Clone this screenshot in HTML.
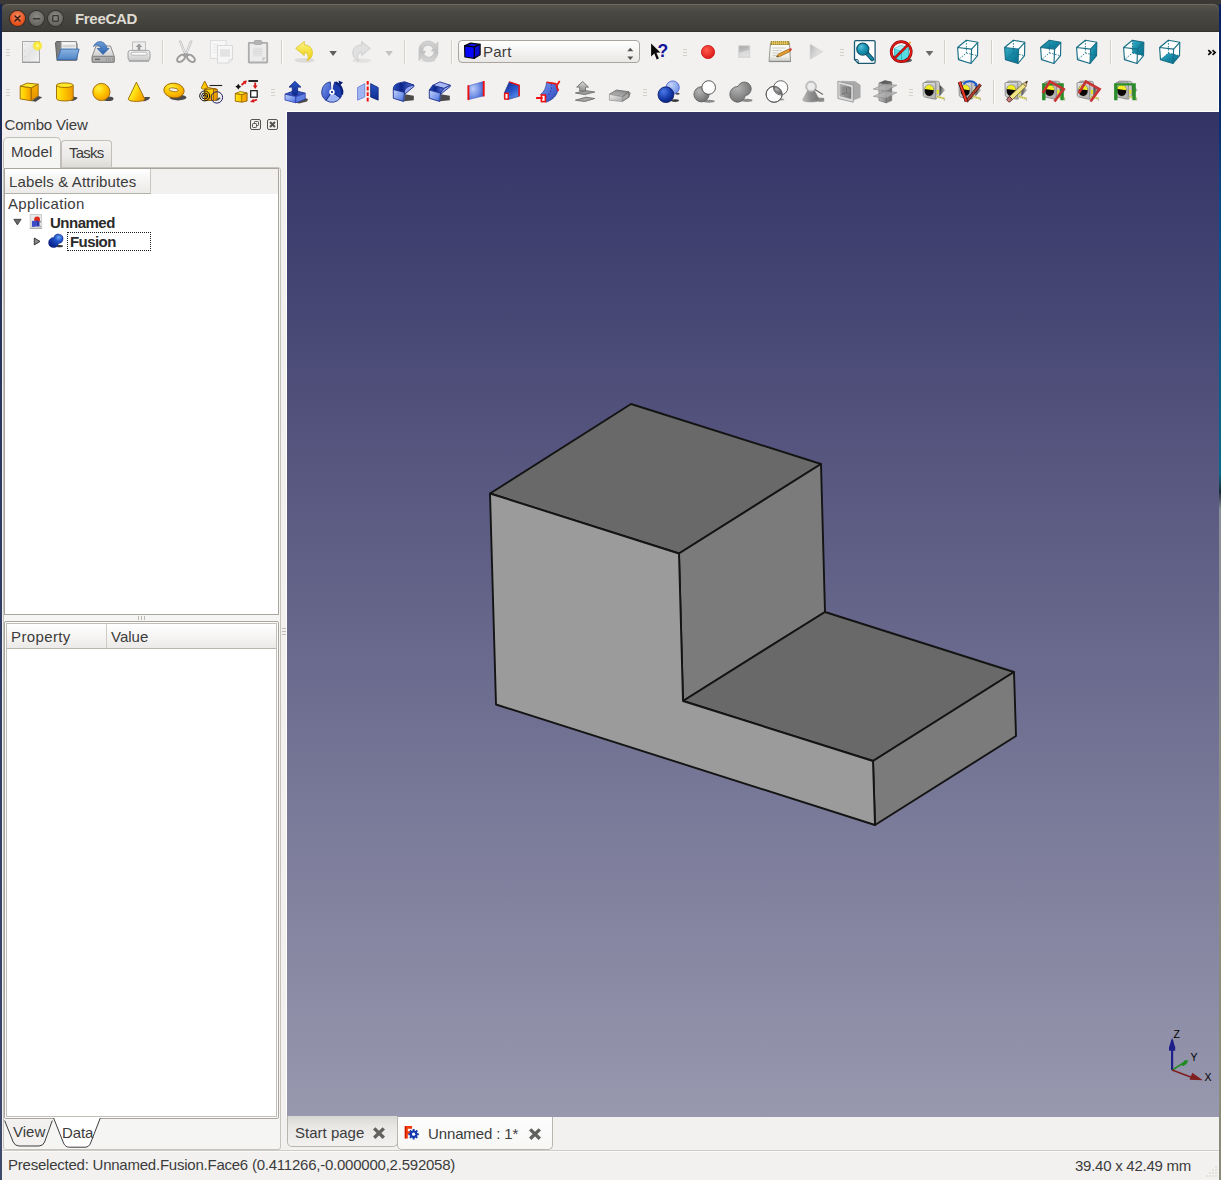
<!DOCTYPE html>
<html><head><meta charset="utf-8"><title>FreeCAD</title>
<style>
html,body{margin:0;padding:0;}
body{width:1221px;height:1180px;position:relative;overflow:hidden;background:#f2f1f0;font-family:"Liberation Sans",sans-serif;}
.t{position:absolute;white-space:pre;line-height:normal;}
.ic{position:absolute;overflow:visible;}
.abs{position:absolute;}

</style></head>
<body>
<svg width="0" height="0" style="position:absolute"><defs>
<linearGradient id="gPage" x1="0" y1="0" x2="1" y2="1"><stop offset="0" stop-color="#f4f4f4"/><stop offset="0.500" stop-color="#e4e4e4"/><stop offset="1" stop-color="#f2f2f2"/></linearGradient>
<radialGradient id="gGlow"><stop offset="0" stop-color="#fffbe0"/><stop offset="0.300" stop-color="#fff04a"/><stop offset="0.750" stop-color="#f4e52a" stop-opacity="0.900"/><stop offset="1" stop-color="#f4e52a" stop-opacity="0"/></radialGradient>
<linearGradient id="gFolder" x1="0" y1="0" x2="0" y2="1"><stop offset="0" stop-color="#8db4e2"/><stop offset="1" stop-color="#4f86c6"/></linearGradient>
<linearGradient id="gDrive" x1="0" y1="0" x2="0" y2="1"><stop offset="0" stop-color="#f0f0f0"/><stop offset="1" stop-color="#bdbdbd"/></linearGradient>
<linearGradient id="gBlueArrow" x1="0" y1="0" x2="0" y2="1"><stop offset="0" stop-color="#6f9fd8"/><stop offset="1" stop-color="#2c62ad"/></linearGradient>
<linearGradient id="gPrinter" x1="0" y1="0" x2="0" y2="1"><stop offset="0" stop-color="#f4f4f4"/><stop offset="1" stop-color="#c9c9c9"/></linearGradient>
<linearGradient id="gYellowArrow" x1="0" y1="0" x2="0" y2="1"><stop offset="0" stop-color="#fff690"/><stop offset="0.500" stop-color="#f4e040"/><stop offset="1" stop-color="#ecd020"/></linearGradient>
<radialGradient id="gRed" cx="0.400" cy="0.350" r="0.700"><stop offset="0" stop-color="#ff5a4a"/><stop offset="1" stop-color="#dc1818"/></radialGradient>
<linearGradient id="gStop" x1="0" y1="0" x2="0.300" y2="1"><stop offset="0" stop-color="#a4a4a4"/><stop offset="0.550" stop-color="#c0c0c0"/><stop offset="0.600" stop-color="#d8d8d8"/><stop offset="1" stop-color="#e0e0e0"/></linearGradient>
<radialGradient id="gTealBall" cx="0.350" cy="0.300" r="0.800"><stop offset="0" stop-color="#5cc4dc"/><stop offset="0.500" stop-color="#1a94b4"/><stop offset="1" stop-color="#0d7490"/></radialGradient>
<linearGradient id="gTeal" x1="0" y1="0" x2="1" y2="1"><stop offset="0" stop-color="#3aaec8"/><stop offset="0.500" stop-color="#1688a6"/><stop offset="1" stop-color="#0a6e8c"/></linearGradient>
<linearGradient id="gY1" x1="0" y1="0" x2="0" y2="1"><stop offset="0" stop-color="#ffd800"/><stop offset="1" stop-color="#f7a400"/></linearGradient>
<linearGradient id="gY2" x1="0" y1="0" x2="0" y2="1"><stop offset="0" stop-color="#f7b000"/><stop offset="1" stop-color="#e89000"/></linearGradient>
<linearGradient id="gY3" x1="0" y1="0" x2="1" y2="0"><stop offset="0" stop-color="#ffe820"/><stop offset="0.400" stop-color="#ffcc00"/><stop offset="1" stop-color="#f09800"/></linearGradient>
<radialGradient id="gYball" cx="0.350" cy="0.300" r="0.800"><stop offset="0" stop-color="#fff040"/><stop offset="0.500" stop-color="#ffc400"/><stop offset="1" stop-color="#f09400"/></radialGradient>
<linearGradient id="gB1" x1="0" y1="0" x2="1" y2="1"><stop offset="0" stop-color="#7c9cf0"/><stop offset="1" stop-color="#2340b8"/></linearGradient>
<linearGradient id="gB2" x1="0" y1="0" x2="1" y2="1"><stop offset="0" stop-color="#5578e0"/><stop offset="1" stop-color="#1a2f9a"/></linearGradient>
<linearGradient id="gB3" x1="0" y1="0" x2="0" y2="1"><stop offset="0" stop-color="#2a55c8"/><stop offset="1" stop-color="#0e2a8a"/></linearGradient>
<linearGradient id="gG1" x1="0" y1="0" x2="0" y2="1"><stop offset="0" stop-color="#d8d8d8"/><stop offset="1" stop-color="#8f8f8f"/></linearGradient>
<linearGradient id="gG2" x1="0" y1="0" x2="1" y2="0"><stop offset="0" stop-color="#bcbcbc"/><stop offset="0.500" stop-color="#8c8c8c"/><stop offset="1" stop-color="#747474"/></linearGradient>
<radialGradient id="gBallBl" cx="0.350" cy="0.300" r="0.800"><stop offset="0" stop-color="#4a7ae8"/><stop offset="0.600" stop-color="#1438a8"/><stop offset="1" stop-color="#0a1f70"/></radialGradient>
<radialGradient id="gBallLt" cx="0.350" cy="0.300" r="0.800"><stop offset="0" stop-color="#c4d4fa"/><stop offset="1" stop-color="#6f92e4"/></radialGradient>
<radialGradient id="gBallGr" cx="0.350" cy="0.300" r="0.800"><stop offset="0" stop-color="#b4b4b4"/><stop offset="1" stop-color="#6a6a6a"/></radialGradient>
<linearGradient id="gYcone" x1="0.200" y1="0.600" x2="0.900" y2="1"><stop offset="0" stop-color="#ffee20"/><stop offset="0.500" stop-color="#ffc000"/><stop offset="1" stop-color="#f09800"/></linearGradient>
<linearGradient id="gBdark" x1="0" y1="0" x2="1" y2="0"><stop offset="0" stop-color="#2a52c0"/><stop offset="0.400" stop-color="#0a2488"/><stop offset="1" stop-color="#5a7ae0"/></linearGradient>
<linearGradient id="gBlite" x1="0" y1="0" x2="1" y2="1"><stop offset="0" stop-color="#c4d2fa"/><stop offset="0.600" stop-color="#7a9aec"/><stop offset="1" stop-color="#3a62d0"/></linearGradient>
<radialGradient id="gBrad" cx="0.300" cy="0.400" r="0.800"><stop offset="0" stop-color="#bccbf8"/><stop offset="0.600" stop-color="#6a8ae4"/><stop offset="1" stop-color="#3355c8"/></radialGradient>
<linearGradient id="gBloft" x1="0.200" y1="0" x2="0.800" y2="1"><stop offset="0" stop-color="#12309a"/><stop offset="0.500" stop-color="#2a55c8"/><stop offset="1" stop-color="#5a9af0"/></linearGradient>
<linearGradient id="gGtop" x1="0" y1="1" x2="1" y2="0"><stop offset="0" stop-color="#c4c4c4"/><stop offset="1" stop-color="#7e7e7e"/></linearGradient>
<linearGradient id="gGfront" x1="0" y1="0" x2="1" y2="1"><stop offset="0" stop-color="#ececec"/><stop offset="1" stop-color="#aaaaaa"/></linearGradient>
<linearGradient id="gShadow" x1="0" y1="0" x2="1" y2="0.300"><stop offset="0" stop-color="#1e1e1e"/><stop offset="1" stop-color="#4a4a4a" stop-opacity="0.250"/></linearGradient>
<linearGradient id="gRefresh" x1="0" y1="0" x2="0" y2="1"><stop offset="0" stop-color="#d6d6d6"/><stop offset="1" stop-color="#c0c0c0"/></linearGradient>
<linearGradient id="gNote" x1="0" y1="0" x2="0" y2="1"><stop offset="0" stop-color="#fbfbf8"/><stop offset="0.700" stop-color="#f0f0ec"/><stop offset="1" stop-color="#c8c8c4"/></linearGradient>
<linearGradient id="gPlay" x1="0" y1="0" x2="1" y2="0.600"><stop offset="0" stop-color="#b4b4b4"/><stop offset="0.500" stop-color="#d4d4d4"/><stop offset="1" stop-color="#e4e4e4"/></linearGradient>
<radialGradient id="gFusion" cx="0.700" cy="0.250" r="0.800"><stop offset="0" stop-color="#6aa8f4"/><stop offset="0.350" stop-color="#1f52c8"/><stop offset="1" stop-color="#08208a"/></radialGradient>
</defs></svg>
<!-- desktop edges -->
<div class="abs" style="left:0;top:0;width:1221px;height:4px;background:#3a3935"></div>
<div class="abs" style="left:0;top:4px;width:2px;height:1176px;background:linear-gradient(#17244f,#2c3a63 40%,#3d4a6c)"></div>
<div class="abs" style="left:1219px;top:4px;width:2px;height:1176px;background:linear-gradient(#0a2060 0%,#0a2a6a 9%,#0a4a8a 17%,#0a6a88 40%,#1a2a3a 41.500%,#8a9098 43%,#8a8a80 70%,#8a8a78 100%)"></div>
<!-- title bar -->
<div class="abs" style="left:2px;top:4px;width:1217px;height:10px;background:#3a3935"></div>
<div class="abs" style="left:2px;top:4px;width:1217px;height:28px;border-radius:6px 6px 0 0;background:linear-gradient(#57554d,#4a4943 30%,#3d3c38);box-shadow:inset 0 1px 0 #6a685f"></div>
<div class="abs" style="left:2px;top:31px;width:1217px;height:1px;background:#33322e"></div>
<!-- window buttons -->
<div class="abs" style="left:10px;top:10.700px;width:15px;height:15px;border-radius:50%;background:radial-gradient(circle at 50% 35%,#f58a62,#e9541f 60%,#c8400f);box-shadow:0 0 0 1px #3a2a22"></div>
<svg class="abs" style="left:10px;top:10.700px" width="15" height="15" viewBox="0 0 15 15"><path d="M5 5l5 5M10 5l-5 5" stroke="#3b2118" stroke-width="1.6" stroke-linecap="round"/></svg>
<div class="abs" style="left:29px;top:10.700px;width:15px;height:15px;border-radius:50%;background:radial-gradient(circle at 50% 35%,#8b8a83,#6d6c66 60%,#5a5953);box-shadow:0 0 0 1px #33322e"></div>
<svg class="abs" style="left:29px;top:10.700px" width="15" height="15" viewBox="0 0 15 15"><path d="M4.5 7.7h6" stroke="#3a3935" stroke-width="1.5" stroke-linecap="round"/></svg>
<div class="abs" style="left:48px;top:10.700px;width:15px;height:15px;border-radius:50%;background:radial-gradient(circle at 50% 35%,#8b8a83,#6d6c66 60%,#5a5953);box-shadow:0 0 0 1px #33322e"></div>
<svg class="abs" style="left:48px;top:10.700px" width="15" height="15" viewBox="0 0 15 15"><rect x="4.7" y="4.7" width="5.6" height="5.6" rx="0.8" fill="none" stroke="#3a3935" stroke-width="1.3"/></svg>

<!-- 3D viewport -->
<div class="abs" style="left:286px;top:111px;width:933px;height:1006px;background:#fdfdfb"></div>
<div class="abs" style="left:287px;top:112px;width:932px;height:1005px;background:linear-gradient(#333366,#9898af)"></div>
<div class="abs" style="left:1218px;top:32px;width:1px;height:80px;background:#fdfdfb"></div>
<svg class="abs" style="left:287px;top:112px" width="932" height="1005" viewBox="287 112 932 1005">
<g stroke="#141414" stroke-width="1.9" stroke-linejoin="round" stroke-linecap="round">
<polygon points="631,404 821,464 679,553.5 490,493.5" fill="#696969"/>
<polygon points="679,553.5 821,464 825,612 683,701" fill="#7b7b7b"/>
<polygon points="683,701 825,612 1014,672 873,761" fill="#696969"/>
<polygon points="873,761 1014,672 1016,736 875,825" fill="#7b7b7b"/>
<polygon points="490,493.5 679,553.5 683,701 873,761 875,825 496,704.5" fill="#9b9b9b"/>
</g>
<!-- axis cross -->
<g>
<path d="M1172.100 1070.100V1040" stroke="#1f1f8a" stroke-width="2.200"/><path d="M1172.100 1037.800l3.100 9.500v3.500h-6.200v-3.500z" fill="#1f1f8a"/>
<path d="M1172.100 1070.100L1183 1063.300" stroke="#1f8a1f" stroke-width="1.600"/><path d="M1181.300 1064.800l3.200-4.200 3.600-0.500-1.200 3.500-3.800 2.600z" fill="#1f8a1f"/>
<path d="M1172.100 1070.100L1192 1077.500" stroke="#7f1f1f" stroke-width="1.600"/><path d="M1202.800 1080.300l-13.300-0.500 2.800-7z" fill="#7f1f1f"/>
<g font-family="'Liberation Sans',sans-serif" font-size="10.500" fill="#000">
<text x="1173.500" y="1037.800">Z</text><text x="1190.400" y="1060.900">Y</text><text x="1204.600" y="1080.800">X</text></g>
</g>
</svg>
<!-- dock title buttons -->
<svg class="abs" style="left:249px;top:118px" width="31" height="14" viewBox="249 118 31 14" fill="none" stroke="#55534e">
<rect x="250.5" y="119.5" width="10" height="10" rx="1.5" stroke-width="1"/>
<rect x="254.5" y="121.5" width="4" height="4" rx="0.8" stroke-width="1"/>
<rect x="252.5" y="123.5" width="4" height="4" rx="0.8" stroke-width="1" fill="#f2f1f0"/>
<rect x="267.5" y="119.5" width="10" height="10" rx="1.5" stroke-width="1"/>
<path d="M270 122l5 5M275 122l-5 5" stroke-width="2"/>
</svg>

<!-- Combo view tabs -->
<div class="abs" style="left:60.500px;top:140.400px;width:51.300px;height:26.600px;border:1px solid #c2bfb8;border-bottom:none;border-radius:4px 4px 0 0;box-sizing:border-box;background:linear-gradient(#f4f3f2,#eceae8 60%,#dedcd8)"></div>
<!-- outer pane -->
<div class="abs" style="left:2.5px;top:166.5px;width:278px;height:983px;border:1px solid #c6c3bc;border-radius:3px;box-sizing:border-box;background:#f5f5f4"></div>
<div class="abs" style="left:2.500px;top:137.300px;width:58.500px;height:30.700px;border:1px solid #c2bfb8;border-bottom:none;border-radius:5px 5px 0 0;box-sizing:border-box;background:#f5f5f4"></div>
<!-- tree widget -->
<div class="abs" style="left:4px;top:168px;width:275px;height:447px;border:1px solid #aaa69f;box-sizing:border-box;background:#fff"></div>
<div class="abs" style="left:5px;top:169px;width:273px;height:25px;background:#f2f1f0"></div>
<div class="abs" style="left:5px;top:169px;width:145px;height:24px;background:linear-gradient(#ffffff,#f5f4f3 50%,#ecebe9);border-right:1px solid #c9c6bf;border-bottom:1px solid #b4b1aa"></div>
<!-- splitter handle (horizontal) -->
<div class="abs" style="left:138px;top:616px;width:1px;height:4px;background:#bdbab3"></div>
<div class="abs" style="left:141px;top:616px;width:1px;height:4px;background:#bdbab3"></div>
<div class="abs" style="left:144px;top:616px;width:1px;height:4px;background:#bdbab3"></div>
<!-- property editor -->
<div class="abs" style="left:4px;top:621px;width:275px;height:498px;border:1px solid #aaa69f;border-radius:2px;box-sizing:border-box;background:#fdfdfd"></div>
<div class="abs" style="left:6px;top:623px;width:271px;height:494px;border:1px solid #c2bfb8;box-sizing:border-box;background:#fff"></div>
<div class="abs" style="left:7px;top:624px;width:269px;height:24px;background:linear-gradient(#ffffff,#f6f5f4 50%,#eceae8);border-bottom:1px solid #b9b6af"></div>
<div class="abs" style="left:106px;top:624px;width:1px;height:24px;background:#cfccc6"></div>
<!-- View/Data tabs -->
<svg class="abs" style="left:0;top:1112px" width="284" height="40" viewBox="0 1112 284 40">
<rect x="5" y="1119" width="273" height="30" fill="#f5f5f4"/>
<path d="M4.6 1120.5 L13.2 1142 Q15 1146 19 1146 L39 1146 Q43 1146 44.6 1142 L52.3 1120.5" fill="#f2f1f0" stroke="#3f3f3f" stroke-width="1"/>
<path d="M53.6 1118 L63.5 1143 Q65.3 1147.2 69.5 1147.2 L85 1147.2 Q89 1147.2 90.6 1143 L100.3 1118 Z" fill="#ffffff" stroke="none"/>
<path d="M53.6 1118 L63.5 1143 Q65.3 1147.2 69.5 1147.2 L85 1147.2 Q89 1147.2 90.6 1143 L100.3 1118" fill="none" stroke="#3f3f3f" stroke-width="1"/>
</svg>
<!-- vertical splitter handle -->
<div class="abs" style="left:282px;top:628px;width:4px;height:1px;background:#bdbab3"></div>
<div class="abs" style="left:282px;top:631px;width:4px;height:1px;background:#bdbab3"></div>
<div class="abs" style="left:282px;top:634px;width:4px;height:1px;background:#bdbab3"></div>

<!-- MDI tabs -->
<div class="abs" style="left:287px;top:1116px;width:110.500px;height:31px;border:1px solid #b9b6af;border-top:none;border-radius:0 0 5px 5px;box-sizing:border-box;background:linear-gradient(#d9d7d3,#e9e8e5 35%,#f2f1f0)"></div>
<div class="abs" style="left:397px;top:1117px;width:156px;height:32.500px;border:1px solid #b9b6af;border-top:none;border-radius:0 0 5px 5px;box-sizing:border-box;background:linear-gradient(#fdfdfd,#f7f7f6)"></div>
<svg class="abs" style="left:372px;top:1126px" width="14" height="14" viewBox="0 0 14 14"><path d="M2.200 2.400l9.600 9.400M11.800 2.400l-9.600 9.400" stroke="#62615d" stroke-width="3.400"/></svg>
<svg class="abs" style="left:528px;top:1127px" width="14" height="14" viewBox="0 0 14 14"><path d="M2.200 2.400l9.600 9.400M11.800 2.400l-9.600 9.400" stroke="#62615d" stroke-width="3.400"/></svg>
<!-- freecad mini icon -->
<svg class="abs" style="left:403px;top:1124px" width="18" height="18" viewBox="403 1124 18 18">
<path d="M404.800 1126.100h7.300v2.700h-4.300v2.500h3v2.700h-3v4.400h-3z" fill="#f23a0a"/><path d="M404.800 1126.100h1.300v12.300h-1.300z" fill="#c81c00"/>
<g fill="#1238b0"><circle cx="413.600" cy="1134.200" r="3.700"/>
<g stroke="#1238b0" stroke-width="1.900"><path d="M413.600 1129v10.400M408.400 1134.200h10.400M409.900 1130.500l7.400 7.400M417.300 1130.500l-7.400 7.400"/></g></g>
<circle cx="413.600" cy="1134.200" r="1.600" fill="#fff"/>
</svg>

<!-- status bar separator -->
<div class="abs" style="left:2px;top:1150px;width:1217px;height:1px;background:#cfccc7"></div>
<div class="abs" style="left:2px;top:1151px;width:1217px;height:1px;background:#fafafa"></div>
<!-- size grip -->
<svg class="abs" style="left:1205px;top:1164px" width="14" height="14" viewBox="0 0 14 14" fill="#e4e2de"><rect x="10" y="2" width="2" height="2"/><rect x="7" y="5" width="2" height="2"/><rect x="10" y="5" width="2" height="2"/><rect x="4" y="8" width="2" height="2"/><rect x="7" y="8" width="2" height="2"/><rect x="10" y="8" width="2" height="2"/><rect x="1" y="11" width="2" height="2"/><rect x="4" y="11" width="2" height="2"/><rect x="7" y="11" width="2" height="2"/><rect x="10" y="11" width="2" height="2"/></svg>

<!-- tree decorations -->
<svg class="abs" style="left:0;top:196px" width="160" height="60" viewBox="0 196 160 60">
<path d="M13.800 219.300h7.300l-3.650 5.600z" fill="#6a6a6a" stroke="#333" stroke-width="0.800" stroke-linejoin="round"/>
<path d="M34.300 238v6.900l5.700-3.450z" fill="#8a8a8a" stroke="#2a2a2a" stroke-width="0.900" stroke-linejoin="round"/>
<!-- document icon -->
<rect x="30.200" y="214.500" width="11.500" height="13.600" fill="#e8e8e8" stroke="#c4c4c4" stroke-width="0.800"/>
<path d="M29.800 228.400h12.300" stroke="#9a9a9a" stroke-width="0.800"/>
<circle cx="37.100" cy="219.400" r="2.900" fill="#e0281a"/>
<path d="M31.900 221l5-0.500v6l-5 0.500z" fill="#3a4cc8"/><path d="M36.900 220.500l2.600 0.800v5.200l-2.600 0z" fill="#2a36a8"/><path d="M39.800 221.800h1.200M39.800 226.300h0.800" stroke="#222" stroke-width="0.700"/>
<!-- fusion icon -->
<ellipse cx="59.500" cy="246.200" rx="3.500" ry="1.100" fill="#3a3a3a"/>
<path d="M48.600 242.500a5 5 0 0 0 9.900 1a4.700 4.700 0 1 0-4.700-5.900a5 5 0 0 0-5.200 4.900z" fill="url(#gFusion)" stroke="#0a1f7a" stroke-width="0.500"/>
</svg>
<!-- toolbar handles, separators, arrows -->
<svg class="abs" style="left:0;top:32px" width="1221" height="80" viewBox="0 32 1221 80">
<g stroke="#d4d1cb" stroke-width="1">
<path d="M6 49.500h4M6 52.500h4M6 55.500h4"/>
<path d="M683 49.500h4M683 52.500h4M683 55.500h4"/>
<path d="M840 49.500h4M840 52.500h4M840 55.500h4"/>
<path d="M6 89.500h4M6 92.500h4M6 95.500h4"/>
<path d="M271 89.500h4M271 92.500h4M271 95.500h4"/>
<path d="M643 89.500h4M643 92.500h4M643 95.500h4"/>
<path d="M909 89.500h4M909 92.500h4M909 95.500h4"/>
</g>
<g stroke="#d3d0ca" stroke-width="1">
<path d="M162.500 40v24M281.500 40v24M404.500 40v24M451.500 40v24M944.500 40v24M991.500 40v24M1110.500 40v24M993.500 80v24"/>
</g>
<g stroke="#fbfbfa" stroke-width="1">
<path d="M163.500 40v24M282.500 40v24M405.500 40v24M452.500 40v24M945.500 40v24M992.500 40v24M1111.500 40v24M994.500 80v24"/>
</g>
<path d="M329.300 51h7.600l-3.800 5z" fill="#605f5b"/>
<path d="M385.300 51h7.600l-3.800 5z" fill="#c4c2be"/>
<path d="M925.700 51h7.600l-3.800 5z" fill="#6a6965"/>
<path d="M1208.300 50.200l2.600 2.300-2.600 2.300M1212.500 50.200l2.600 2.300-2.600 2.300" fill="none" stroke="#0a0a0a" stroke-width="1.700"/>
</svg>
<!-- workbench combobox -->
<div class="abs" style="left:458px;top:40px;width:182px;height:23px;border:1px solid #aaa69f;border-radius:4px;box-sizing:border-box;background:linear-gradient(#ffffff,#f4f3f2 50%,#e9e8e6)"></div>
<svg class="abs" style="left:460px;top:40px" width="180" height="23" viewBox="460 40 180 23">
<path d="M464.600 45.800l6-2.700 9.500 1.200-5.800 2.600z" fill="#1414f0" stroke="#050510" stroke-width="1.200" stroke-linejoin="round"/>
<path d="M474.300 46.900l5.800-2.600v10.500l-5.800 3.500z" fill="#0a0ad0" stroke="#050510" stroke-width="1.200" stroke-linejoin="round"/>
<path d="M464.600 45.800l9.700 1.100v11.400l-9.400-1.300z" fill="#0505fa" stroke="#050510" stroke-width="1.200" stroke-linejoin="round"/>
<path d="M627.300 51.200l3-3.400 3 3.400z" fill="#55534e"/><path d="M627.300 56.500l3 3.500 3-3.500z" fill="#55534e"/>
</svg>
<div class="abs" style="left:67px;top:232px;width:84px;height:19px;box-sizing:border-box;border:1px dotted #1a1a1a"></div>

<!-- toolbar icons -->
<svg class="ic" style="left:15px;top:36px" width="32" height="32" viewBox="0 0 32 32"><rect x="7.500" y="5.500" width="17" height="20.500" fill="url(#gPage)" stroke="#aaaaaa"/>
<path d="M7 26.500h18" stroke="#9a9a9a" stroke-width="1"/><path d="M9.500 8v1M9.500 14v1M9.500 20v1" stroke="#d0d0d0"/>
<circle cx="22.500" cy="9.800" r="5.200" fill="url(#gGlow)"/></svg>
<svg class="ic" style="left:51px;top:36px" width="32" height="32" viewBox="0 0 32 32"><path d="M4.500 7l1-1.500h4.500l1.500 2h14.500v16.500h-20z" fill="#7e7e7e" stroke="#5e5e5e"/>
<path d="M10 5.500h15.500v10h-15.500z" fill="url(#gPage)" stroke="#8e8e8e"/>
<path d="M11.500 7.500h12.500" stroke="#fafafa" stroke-width="1.400"/><path d="M11.500 10h12.500" stroke="#c4c4c4"/>
<path d="M10.100 13.100h18l-2.900 10.500h-19z" fill="url(#gFolder)" stroke="#3d6fb0"/>
<path d="M5.500 24.500h20" stroke="#555" stroke-opacity="0.500"/></svg>
<svg class="ic" style="left:87px;top:36px" width="32" height="32" viewBox="0 0 32 32"><path d="M9 10h14.500l3.700 10.300v5.900h-22v-5.900z" fill="url(#gDrive)" stroke="#8a8a8a"/>
<rect x="5.200" y="20.300" width="22" height="5.900" rx="1" fill="#b0b0b0" stroke="#7e7e7e"/>
<path d="M8 23.300h5" stroke="#6e6e6e" stroke-width="1.500"/><path d="M19.500 22v3M21.500 22v3M23.500 22v3M25.500 22v3" stroke="#9a9a9a"/>
<path d="M6.600 10.500c2-6 11-7.500 13.400 1.900h2l-6 6-5.800-6h3.800c-1.500-4-5-4-7.400-1.900z" fill="url(#gBlueArrow)" stroke="#2c5fa5" stroke-width="0.800"/></svg>
<svg class="ic" style="left:123px;top:36px" width="32" height="32" viewBox="0 0 32 32"><rect x="9.500" y="5.900" width="13" height="9" fill="#eeeeee" stroke="#bdbdbd"/>
<path d="M16 7.500l3.300 3.500h-2v3h-2.600v-3h-2z" fill="#9a9a9a"/>
<rect x="5" y="14.400" width="22" height="10.300" rx="2.500" fill="url(#gPrinter)" stroke="#a2a2a2"/>
<rect x="8" y="16.200" width="16" height="3" rx="1.500" fill="#fdfdfd" stroke="#b5b5b5"/>
<path d="M6 25.500h20" stroke="#b0b0b0"/></svg>
<svg class="ic" style="left:170px;top:36px" width="32" height="32" viewBox="0 0 32 32"><path d="M9.100 5l1.800 0 5.400 13.300-1.400 0.700z" fill="#f2f2f2" stroke="#bcbcbc" stroke-width="0.800"/><path d="M22.200 5l-1.800 0-5.400 13.300 1.400 0.700z" fill="#f2f2f2" stroke="#bcbcbc" stroke-width="0.800"/>
<g fill="none" stroke="#9c9c9c" stroke-width="2"><path d="M15.200 17.500l-2.200 2.500M16.200 17.500l2.200 2.500"/>
<ellipse cx="11.100" cy="22.300" rx="4.600" ry="2.800" transform="rotate(-40 11.100 22.300)"/><ellipse cx="20.900" cy="22.300" rx="4.600" ry="2.800" transform="rotate(40 20.900 22.300)"/></g></svg>
<svg class="ic" style="left:206px;top:36px" width="32" height="32" viewBox="0 0 32 32"><rect x="4.500" y="4.500" width="15.500" height="18" fill="#f7f7f7" stroke="#dedede"/>
<path d="M7 8.500h5M7 11h5M7 13.500h5M7 16h5" stroke="#e9e9e9"/>
<path d="M11.500 9.500h15v14l-3.500 3.500h-11.500z" fill="#f6f6f6" stroke="#d9d9d9"/>
<rect x="14" y="13" width="10" height="8" fill="#e7e7e7"/><path d="M14.500 15h9M14.500 17h9M14.500 19h9" stroke="#dedede" stroke-width="0.800"/>
<path d="M23 27v-3.500h3.500z" fill="#fdfdfd" stroke="#d9d9d9"/></svg>
<svg class="ic" style="left:242px;top:36px" width="32" height="32" viewBox="0 0 32 32"><rect x="6.800" y="6.800" width="18.400" height="19.700" rx="0.500" fill="#ececec" stroke="#adadad" stroke-width="1.800"/>
<rect x="12.300" y="4.500" width="7.400" height="4" rx="1" fill="#b4b4b4" stroke="#a2a2a2" stroke-width="0.800"/>
<rect x="11" y="11.500" width="9.500" height="9" fill="#e2e2e2"/>
<path d="M11 13.500h9M11 15.500h9.500M11 17.500h8" stroke="#dadada" stroke-width="0.800"/>
<path d="M20.300 25.300v-3.800h3.800z" fill="#c4c4c4"/></svg>
<svg class="ic" style="left:289px;top:36px" width="32" height="32" viewBox="0 0 32 32"><ellipse cx="15.500" cy="24.300" rx="10" ry="2.400" fill="#9a9a9a" opacity="0.250"/>
<path d="M6.700 12.400L15.300 5.500L15.300 9C20.500 9 23.600 12.500 23.400 17.200C23.200 20.800 21 23.500 17.900 24.900C19.800 22 20.200 17.500 15.300 16.200L15.300 19.600Z" fill="url(#gYellowArrow)" stroke="#dcc020" stroke-width="0.800"/></svg>
<svg class="ic" style="left:345px;top:36px" width="32" height="32" viewBox="0 0 32 32"><ellipse cx="16.500" cy="24.600" rx="9.500" ry="2.200" fill="#c0c0c0" opacity="0.300"/>
<path d="M25.300 12.400L16.700 5.500L16.700 9C11 9 7.500 12.500 7.800 17.500C8 21 10.500 23.500 14.100 24.900C12 22 11.500 17.500 16.700 16.200L16.700 19.600Z" fill="#e0e0e0" stroke="#c8c8c8" stroke-width="0.800"/></svg>
<svg class="ic" style="left:412px;top:36px" width="32" height="32" viewBox="0 0 32 32"><ellipse cx="16.300" cy="24.800" rx="8" ry="1.500" fill="#d0d0d0" opacity="0.500"/><g fill="url(#gRefresh)" stroke="#b8b8b8" stroke-width="0.600"><path d="M6.900 14.600C6.900 9 11 5.100 16.200 5.100C19 5.100 21.500 6.300 23.400 8.500L25.900 5.900L25.900 15.300L19.400 15.100L21.100 12.400C20 10.500 18.300 9.200 16.200 9.200C13 9.200 11 11.500 10.900 14.600Z"/><path d="M6.900 14.600C6.900 9 11 5.100 16.200 5.100C19 5.100 21.500 6.300 23.400 8.500L25.900 5.900L25.900 15.300L19.400 15.100L21.100 12.400C20 10.500 18.300 9.200 16.200 9.200C13 9.200 11 11.500 10.900 14.600Z" transform="rotate(180 16.450 15.200)"/></g></svg>
<svg class="ic" style="left:643px;top:36px" width="32" height="32" viewBox="0 0 32 32"><path d="M8.100 7.600v13l3.200-3 2.400 5.800 2.200-1-2.500-5.600 4-0.200z" fill="#0a0a0a"/>
<text x="14.600" y="20.600" font-family="Liberation Sans, sans-serif" font-weight="bold" font-size="17.500" fill="#15159a">?</text></svg>
<svg class="ic" style="left:692px;top:36px" width="32" height="32" viewBox="0 0 32 32"><circle cx="16" cy="16" r="6.600" fill="url(#gRed)" stroke="#c41818" stroke-width="0.800"/></svg>
<svg class="ic" style="left:728px;top:36px" width="32" height="32" viewBox="0 0 32 32"><rect x="10.800" y="9.800" width="10.900" height="11.400" fill="url(#gStop)" stroke="#d0d0d0"/></svg>
<svg class="ic" style="left:764px;top:36px" width="32" height="32" viewBox="0 0 32 32"><path d="M6.500 7.500h19l1.100 18h-21.600z" fill="url(#gNote)" stroke="#8e8e86" stroke-width="0.900"/>
<path d="M5 25.500h21.600" stroke="#8a8a8a" stroke-width="1.200"/>
<path d="M7 5.500h18v3h-18z" fill="#c8a83a" stroke="#8a7020" stroke-width="0.700"/><path d="M8.500 5v3.500M10.500 5v3.500M12.500 5v3.500M14.500 5v3.500M16.500 5v3.500M18.500 5v3.500M20.500 5v3.500M22.500 5v3.500" stroke="#e8d070" stroke-width="0.800"/>
<path d="M8.500 12h13M8.500 14.500h9M8.500 17h6M8.500 19.500h5" stroke="#c4c4bc" stroke-width="0.800"/>
<path d="M14.500 18l10.500-5 1.200 2.400-10.700 5.200-3 0.200z" fill="#eaa030" stroke="#8a5a10" stroke-width="0.700"/><path d="M25 13l1.600-0.700c1-0.300 1.700 1.300 0.800 2l-1.200 0.900z" fill="#e03030"/><path d="M12.500 20.800l1.500-1.300 0.500 1.100z" fill="#333"/></svg>
<svg class="ic" style="left:800px;top:36px" width="32" height="32" viewBox="0 0 32 32"><path d="M10.200 8.200v15l12.700-7.500z" fill="url(#gPlay)" stroke="#d0d0d0" stroke-width="0.600"/></svg>
<svg class="ic" style="left:848px;top:36px" width="32" height="32" viewBox="0 0 32 32"><path d="M7.800 4.700h18c0.800 0 1.300 0.500 1.300 1.300v20c0 0.800-0.500 1.300-1.300 1.300h-15.500l-3.800-3.800v-17.500c0-0.800 0.500-1.300 1.300-1.300z" fill="#fdfdfd" stroke="#1d5a72" stroke-width="1.300"/><path d="M6.500 23.500h2.500c0.800 0 1.300 0.500 1.300 1.300v2.500" fill="none" stroke="#1d5a72" stroke-width="1"/>
<path d="M19.600 17.800l4.600 5.300" stroke="#0d5870" stroke-width="4.200" stroke-linecap="round"/><path d="M19.600 17.800l4.600 5.300" stroke="#1a8aa8" stroke-width="2" stroke-linecap="round"/>
<circle cx="14.800" cy="13.100" r="6" fill="url(#gTealBall)" stroke="#0d5870" stroke-width="1.300"/></svg>
<svg class="ic" style="left:884px;top:36px" width="32" height="32" viewBox="0 0 32 32"><ellipse cx="22" cy="24.300" rx="6" ry="2.200" fill="#333" opacity="0.800"/>
<path d="M10.500 12.500l6.500-3 7.500 2.500v9.500l-7 3.500-7-3z" fill="#58dce4" stroke="#1ea0b0" stroke-width="0.700"/><path d="M10.500 12.500l7 2.500 7-3M17.500 15v10" fill="none" stroke="#1ea0b0" stroke-width="0.700"/><path d="M10.500 12.500l6.500-3 7.500 2.500-7 3z" fill="#a8f0f4"/>
<path d="M17 16.500l8.800-9.800" stroke="#f0d020" stroke-width="1.400"/><circle cx="26" cy="6.500" r="0.900" fill="#f0a020"/>
<circle cx="17.200" cy="15.700" r="10" fill="none" stroke="#7a0808" stroke-width="2.700"/><circle cx="17.200" cy="15.700" r="10" fill="none" stroke="#e01818" stroke-width="1.700"/>
<path d="M10.200 22.700l14-14" stroke="#7a0808" stroke-width="2.600"/><path d="M10.200 22.700l14-14" stroke="#e01818" stroke-width="1.600"/></svg>
<svg class="ic" style="left:952px;top:36px" width="32" height="32" viewBox="0 0 32 32"><path d="M5.600 11.500L14.400 4.200L25.800 6.300L25.500 19.700L19 27.500L6.500 23.600z" fill="#ffffff"/><g fill="none" stroke="#1a6f86" stroke-width="1.150" stroke-linejoin="round"><path d="M5.600 11.500L19.600 13.100L19 27.500L6.500 23.600z"/><path d="M19.600 13.100L25.800 6.300L25.500 19.700L19 27.500"/><path d="M5.600 11.500L14.400 4.200L25.800 6.300"/></g><g fill="none" stroke="#1a6f86" stroke-width="0.900" stroke-dasharray="1.600 1.300"><path d="M14.400 4.200L14.400 17L6.500 23.600M14.400 17L25.500 19.700"/></g></svg>
<svg class="ic" style="left:999px;top:36px" width="32" height="32" viewBox="0 0 32 32"><path d="M5.600 11.500L14.400 4.200L25.800 6.300L25.500 19.700L19 27.500L6.500 23.600z" fill="#ffffff"/><path d="M5.600 11.500L19.600 13.100L19 27.500L6.500 23.600z" fill="url(#gTeal)"/><g fill="none" stroke="#1a6f86" stroke-width="1.150" stroke-linejoin="round"><path d="M5.600 11.500L19.600 13.100L19 27.500L6.500 23.600z"/><path d="M19.600 13.100L25.800 6.300L25.500 19.700L19 27.500"/><path d="M5.600 11.500L14.400 4.200L25.800 6.300"/></g><g fill="none" stroke="#1a6f86" stroke-width="0.900" stroke-dasharray="1.600 1.300"><path d="M14.400 4.200L14.400 17L6.500 23.600M14.400 17L25.500 19.700"/></g></svg>
<svg class="ic" style="left:1035px;top:36px" width="32" height="32" viewBox="0 0 32 32"><path d="M5.600 11.500L14.400 4.200L25.800 6.300L25.500 19.700L19 27.500L6.500 23.600z" fill="#ffffff"/><path d="M5.600 11.500L14.400 4.200L25.800 6.300L19.600 13.100z" fill="url(#gTeal)"/><g fill="none" stroke="#1a6f86" stroke-width="1.150" stroke-linejoin="round"><path d="M5.600 11.500L19.600 13.100L19 27.500L6.500 23.600z"/><path d="M19.600 13.100L25.800 6.300L25.500 19.700L19 27.500"/><path d="M5.600 11.500L14.400 4.200L25.800 6.300"/></g><g fill="none" stroke="#1a6f86" stroke-width="0.900" stroke-dasharray="1.600 1.300"><path d="M14.400 4.200L14.400 17L6.500 23.600M14.400 17L25.500 19.700"/></g></svg>
<svg class="ic" style="left:1071px;top:36px" width="32" height="32" viewBox="0 0 32 32"><path d="M5.600 11.500L14.400 4.200L25.800 6.300L25.500 19.700L19 27.500L6.500 23.600z" fill="#ffffff"/><path d="M19.600 13.100L25.800 6.300L25.500 19.700L19 27.500z" fill="url(#gTeal)"/><g fill="none" stroke="#1a6f86" stroke-width="1.150" stroke-linejoin="round"><path d="M5.600 11.500L19.600 13.100L19 27.500L6.500 23.600z"/><path d="M19.600 13.100L25.800 6.300L25.500 19.700L19 27.500"/><path d="M5.600 11.500L14.400 4.200L25.800 6.300"/></g><g fill="none" stroke="#1a6f86" stroke-width="0.900" stroke-dasharray="1.600 1.300"><path d="M14.400 4.200L14.400 17L6.500 23.600M14.400 17L25.500 19.700"/></g></svg>
<svg class="ic" style="left:1118px;top:36px" width="32" height="32" viewBox="0 0 32 32"><path d="M5.600 11.500L14.400 4.200L25.800 6.300L25.500 19.700L19 27.500L6.500 23.600z" fill="#ffffff"/><path d="M14.400 4.200L25.800 6.300L25.500 19.700L14.400 17z" fill="url(#gTeal)"/><g fill="none" stroke="#1a6f86" stroke-width="1.150" stroke-linejoin="round"><path d="M5.600 11.500L19.600 13.100L19 27.500L6.500 23.600z"/><path d="M19.600 13.100L25.800 6.300L25.500 19.700L19 27.500"/><path d="M5.600 11.500L14.400 4.200L25.800 6.300"/></g><g fill="none" stroke="#1a6f86" stroke-width="0.900" stroke-dasharray="1.600 1.300"><path d="M14.400 4.200L14.400 17L6.500 23.600M14.400 17L25.500 19.700"/></g></svg>
<svg class="ic" style="left:1154px;top:36px" width="32" height="32" viewBox="0 0 32 32"><path d="M5.600 11.500L14.400 4.200L25.800 6.300L25.500 19.700L19 27.500L6.500 23.600z" fill="#ffffff"/><path d="M6.500 23.600L14.400 17L25.500 19.700L19 27.500z" fill="url(#gTeal)"/><g fill="none" stroke="#1a6f86" stroke-width="1.150" stroke-linejoin="round"><path d="M5.600 11.500L19.600 13.100L19 27.500L6.500 23.600z"/><path d="M19.600 13.100L25.800 6.300L25.500 19.700L19 27.500"/><path d="M5.600 11.500L14.400 4.200L25.800 6.300"/></g><g fill="none" stroke="#1a6f86" stroke-width="0.900" stroke-dasharray="1.600 1.300"><path d="M14.400 4.200L14.400 17L6.500 23.600M14.400 17L25.500 19.700"/></g></svg>
<svg class="ic" style="left:14px;top:76px" width="32" height="32" viewBox="0 0 32 32"><path d="M17.500 25l6.700-5 4 1.200-6.500 4.600z" fill="#4a4a4a"/>
<path d="M6.200 10.200l11.100 1.500v13.100l-11.100-1.900z" fill="url(#gY3)" stroke="#9a6500" stroke-width="0.900" stroke-linejoin="round"/>
<path d="M17.300 11.700l6.900-3.500v11.500l-6.900 5.100z" fill="url(#gY2)" stroke="#9a6500" stroke-width="0.900" stroke-linejoin="round"/>
<path d="M6.200 10.200l6.900-3.100 11.100 1.100-6.900 3.500z" fill="#ffe928" stroke="#9a6500" stroke-width="0.900" stroke-linejoin="round"/></svg>
<svg class="ic" style="left:50px;top:76px" width="32" height="32" viewBox="0 0 32 32"><path d="M21 25c3 0 6.500-1.800 6.500-3.500l-4.500-1z" fill="#4a4a4a"/>
<path d="M6.500 9.200v13.500c0 3 16.700 3 16.700 0v-13.500z" fill="url(#gY3)" stroke="#9a6500" stroke-width="0.900" stroke-linejoin="round"/>
<ellipse cx="14.850" cy="9.200" rx="8.350" ry="2.300" fill="#ffe928" stroke="#9a6500" stroke-width="0.900" stroke-linejoin="round"/></svg>
<svg class="ic" style="left:86px;top:76px" width="32" height="32" viewBox="0 0 32 32"><ellipse cx="22.300" cy="22.800" rx="5.200" ry="2.300" fill="#4a4a4a"/><circle cx="15.400" cy="16" r="8.600" fill="url(#gYball)" stroke="#9a6500" stroke-width="0.900" stroke-linejoin="round"/></svg>
<svg class="ic" style="left:122px;top:76px" width="32" height="32" viewBox="0 0 32 32"><path d="M21 25.200c3 0 7-1.500 7-4.200l-5.500 0z" fill="#4a4a4a"/>
<path d="M14.400 6.200l-8.200 17c0.500 3 16 3 16.700 0z" fill="url(#gYcone)" stroke="#9a6500" stroke-width="0.900" stroke-linejoin="round"/></svg>
<svg class="ic" style="left:158px;top:76px" width="32" height="32" viewBox="0 0 32 32"><ellipse cx="20" cy="21.600" rx="8.500" ry="2.800" fill="#4a4a4a"/>
<ellipse cx="16" cy="14.500" rx="10.200" ry="7.300" fill="url(#gYball)" stroke="#9a6500" stroke-width="0.900" stroke-linejoin="round" transform="rotate(6 16 14.500)"/>
<ellipse cx="15.600" cy="13.800" rx="4.600" ry="1.800" fill="#f4f2e8" stroke="#9a6500" stroke-width="0.800" transform="rotate(6 15.600 13.800)"/></svg>
<svg class="ic" style="left:194px;top:76px" width="32" height="32" viewBox="0 0 32 32"><path d="M10.700 5l-3.500 7c0 1.500 7.200 1.500 7.200 0z" fill="url(#gY3)" stroke="#9a6500" stroke-width="0.900" stroke-linejoin="round"/>
<path d="M15.500 9.500h12.700" stroke="#222" stroke-width="1.100"/>
<path d="M10.500 13.500l9-1v12l-9 0z" fill="url(#gY1)" stroke="#9a6500" stroke-width="0.900" stroke-linejoin="round"/><path d="M19.500 12.500l3.800 1v10.500l-3.800 0.500z" fill="url(#gY2)" stroke="#9a6500" stroke-width="0.900" stroke-linejoin="round"/><path d="M10.500 13.500l4-2 8.800 2-3.800-1z" fill="#ffee30" stroke="#9a6500" stroke-width="0.900" stroke-linejoin="round"/>
<path d="M21 24.500l4-3 2 0.500-3 2.500z" fill="#4a4a4a"/>
<g fill="none" stroke="#111" stroke-width="1"><circle cx="10.700" cy="19.900" r="5"/><circle cx="10.700" cy="19.900" r="3"/><path d="M9.500 20.500v-1.500h2.500v2.500"/></g>
<circle cx="22.900" cy="21.400" r="5.700" fill="none" stroke="#1f1f6e" stroke-width="1"/></svg>
<svg class="ic" style="left:230px;top:76px" width="32" height="32" viewBox="0 0 32 32"><path d="M5.300 17.500l6.500 1 5.300-1.500v8l-5.300 1.200-6.500-1z" fill="url(#gY3)" stroke="#9a6500" stroke-width="0.900" stroke-linejoin="round"/><path d="M5.300 17.500l5-2 6.800 1.500-5.300 1.500z" fill="#ffee30" stroke="#9a6500" stroke-width="0.900" stroke-linejoin="round"/><path d="M11.800 18.500v7.700" fill="none" stroke="#9a6500" stroke-width="0.900" stroke-linejoin="round"/>
<path d="M8.300 7.700l1.100 1.900 1.900 1.100-1.900 1.100-1.100 1.900-1.100-1.900-1.900-1.100 1.900-1.100z" fill="#111"/>
<path d="M11.500 9l3-2.500" stroke="#d81818" stroke-width="1.800"/><path d="M13 5l4-0.500-1.500 4z" fill="#d81818"/>
<path d="M18.400 5h9.600" stroke="#111" stroke-width="1.800"/>
<path d="M25.200 6.600v3.500" stroke="#d81818" stroke-width="1.800"/><path d="M22.800 9.500h4.800l-2.400 3.500z" fill="#d81818"/>
<rect x="20.700" y="14.700" width="6.500" height="6.500" fill="#fff" stroke="#111" stroke-width="1.200"/>
<path d="M27 23.500l-4 1.600" stroke="#d81818" stroke-width="1.800"/><path d="M20 26l3.500-3.200 0.800 3.600z" fill="#d81818"/></svg>
<svg class="ic" style="left:280px;top:76px" width="32" height="32" viewBox="0 0 32 32"><path d="M16 26.600l9-4.500 3 0.800-1 2.500-8 2z" fill="#4a4a4a"/>
<path d="M5 18.200l9.600-3.600 10.600 2.600-9.400 3.400z" fill="#3a58c8" stroke="#1a2f8a" stroke-width="0.900" stroke-linejoin="round"/>
<path d="M5 18.200l10.800 2.400v6.200l-10.800-2.800z" fill="url(#gBlite)" stroke="#2a3ab0" stroke-width="0.800" stroke-linejoin="round"/><path d="M15.800 20.600l9.400-3.400v5.900l-9.400 3.700z" fill="#5f80e2" stroke="#2a3ab0" stroke-width="0.800" stroke-linejoin="round"/>
<path d="M14.900 5.300l6 5.800h-3.300v7.500l-2.500 1-2.800-1v-7.500h-3.300z" fill="url(#gB3)" stroke="#1a2f8a" stroke-width="0.900" stroke-linejoin="round"/></svg>
<svg class="ic" style="left:316px;top:76px" width="32" height="32" viewBox="0 0 32 32"><path d="M16 16L10.100 24.400A10.300 10.300 0 0 1 14.200 5.900z" fill="url(#gB1)" stroke="#1a2f8a" stroke-width="0.900" stroke-linejoin="round"/>
<path d="M16 16L24.400 21.900A10.300 10.300 0 0 1 10.100 24.400z" fill="#9db4f4" stroke="#1a2f8a" stroke-width="0.900" stroke-linejoin="round"/>
<path d="M16 16L18.700 6.100A10.300 10.300 0 0 1 24.400 21.900z" fill="#1a3cae" stroke="#1a2f8a" stroke-width="0.900" stroke-linejoin="round"/>
<path d="M19.500 6.400A10.300 10.300 0 0 1 26 18.500" fill="none" stroke="#0a1f78" stroke-width="2.200"/><path d="M22.500 4.500l4.500 2-3.500 3.200z" fill="#0a1f78"/>
<circle cx="16" cy="16" r="2.700" fill="#fff"/><circle cx="16" cy="16" r="1.100" fill="#0a1f78"/><path d="M15.300 6v8h1.400v-8z" fill="#f4f4f8"/></svg>
<svg class="ic" style="left:352px;top:76px" width="32" height="32" viewBox="0 0 32 32"><path d="M5.500 11.500l7.300-3.900v13.400l-7.300 3.200z" fill="#9fb2f2" stroke="#5a70d0" stroke-width="0.700"/>
<path d="M18.600 7.600l7.600 3.900v12.700l-7.600-3.200z" fill="url(#gB3)" stroke="#0a1a6a" stroke-width="0.700"/>
<path d="M15.700 5v21" stroke="#f01010" stroke-width="2" stroke-dasharray="3.800 1.800"/></svg>
<svg class="ic" style="left:388px;top:76px" width="32" height="32" viewBox="0 0 32 32"><path d="M16.600 18.300l9.200 1.400v4.600l-9.800 0.900z" fill="#4a4a4a"/>
<path d="M16.400 5.900l9.500 3.300l0.100 1.300l-9.400 7.800l-0.200-2z" fill="#93a5f0" stroke="#1a2f8a" stroke-width="0.900" stroke-linejoin="round"/>
<path d="M5.300 13.500C5.300 9 8 7 16.400 5.900L25.900 9.200C20 10 16.500 12 16.400 16.400z" fill="url(#gBdark)" stroke="#1a2f8a" stroke-width="0.900" stroke-linejoin="round"/>
<path d="M5.300 13.500l11.100 2.900l-0.700 9.100l-10.400-3.200z" fill="url(#gBlite)" stroke="#1a2f8a" stroke-width="0.900" stroke-linejoin="round"/></svg>
<svg class="ic" style="left:424px;top:76px" width="32" height="32" viewBox="0 0 32 32"><path d="M16.600 18.300l9.200 1.400v4.600l-9.800 0.900z" fill="#4a4a4a"/>
<path d="M19.700 12.400l6.500-3.200l0.100 1.300l-9.700 7.800l-0.200-1.300z" fill="#93a5f0" stroke="#1a2f8a" stroke-width="0.900" stroke-linejoin="round"/>
<path d="M8.600 9.400l7.200-3.500 10.400 3.300-6.500 3.200z" fill="#a9b8f4" stroke="#1a2f8a" stroke-width="0.900" stroke-linejoin="round"/>
<path d="M5.300 14.100l3.300-4.700 11.100 3-3.300 4.600z" fill="url(#gBdark)" stroke="#1a2f8a" stroke-width="0.900" stroke-linejoin="round"/>
<path d="M5.300 14.100l11.100 2.900l-0.600 8.500l-10.500-3.200z" fill="url(#gBlite)" stroke="#1a2f8a" stroke-width="0.900" stroke-linejoin="round"/></svg>
<svg class="ic" style="left:460px;top:76px" width="32" height="32" viewBox="0 0 32 32"><path d="M8.400 9.800l15.300-4.300v14.400l-15.300 3.700z" fill="url(#gBrad)" stroke="#3355c0" stroke-width="0.500"/>
<path d="M8.400 9.300v14.800" stroke="#f01010" stroke-width="1.900"/><path d="M23.700 5v15.400" stroke="#f01010" stroke-width="1.900"/></svg>
<svg class="ic" style="left:496px;top:76px" width="32" height="32" viewBox="0 0 32 32"><path d="M13.200 5.900l9.900 3.300v11.100l-11.200 3.300-3.600-1.300v-5.300z" fill="url(#gBloft)" stroke="#1a2f8a" stroke-width="0.600"/>
<path d="M13.200 5.900l9.900 3.300v11.100" fill="none" stroke="#f01010" stroke-width="1.500"/>
<rect x="8.800" y="17.300" width="3.400" height="5.800" fill="#fff" stroke="#f01010" stroke-width="1.400"/></svg>
<svg class="ic" style="left:532px;top:76px" width="32" height="32" viewBox="0 0 32 32"><path d="M14.600 6.300L24.400 7.900C27.500 13 26 22 13.900 26.200L8.700 18.300C12 16 14 12 14.600 6.300z" fill="url(#gB1)" stroke="#1a2f8a" stroke-width="0.600"/>
<path d="M19.500 7.500C20.500 14 18 19 12 22.500" fill="none" stroke="#2a2a9a" stroke-width="1" stroke-dasharray="2 1.500" opacity="0.700"/>
<path d="M14.600 6.300L24.400 7.900" stroke="#f01010" stroke-width="1.600"/><path d="M27.700 5l-3.300 5 2 5" fill="none" stroke="#f01010" stroke-width="1.700"/>
<rect x="9.400" y="19" width="4" height="6.600" fill="#fff" stroke="#f01010" stroke-width="1.600"/><path d="M4.100 22h6.500" stroke="#f01010" stroke-width="2"/></svg>
<svg class="ic" style="left:568px;top:76px" width="32" height="32" viewBox="0 0 32 32"><path d="M14.600 5.500l5.900 5.600h-3v4h-5.800v-4h-3z" fill="url(#gG1)" stroke="#6e6e6e" stroke-width="0.900" stroke-linejoin="round"/>
<path d="M7.400 17l10.500-2.300 8.900 1.300-10.200 2.600z" fill="#9c9c9c" stroke="#6e6e6e" stroke-width="0.900" stroke-linejoin="round"/><path d="M7.400 24.200l10.500-3 8.900 1.300-10.200 3z" fill="#a4a4a4" stroke="#6e6e6e" stroke-width="0.900" stroke-linejoin="round"/></svg>
<svg class="ic" style="left:604px;top:76px" width="32" height="32" viewBox="0 0 32 32"><path d="M18.300 25.500l7-4.500 1.500-4-2-1.300z" fill="#8a8a8a"/><path d="M18.300 20.700l6.500-5v5.500l-6.500 4.300z" fill="#a6a6a6" stroke="#6e6e6e" stroke-width="0.900" stroke-linejoin="round"/>
<path d="M5.400 18.300l7-4.200 12.400 1.600-6.500 5z" fill="url(#gGtop)" stroke="#6e6e6e" stroke-width="0.900" stroke-linejoin="round"/><path d="M5.400 18.300l12.900 2.400v4.800l-12.900-1.300z" fill="url(#gGfront)" stroke="#9a9a9a" stroke-width="0.800"/></svg>
<svg class="ic" style="left:653px;top:76px" width="32" height="32" viewBox="0 0 32 32"><ellipse cx="22" cy="24.600" rx="4" ry="1.400" fill="#3a3a3a"/><ellipse cx="24.500" cy="17.800" rx="2.200" ry="1" fill="#4a4a4a"/>
<circle cx="19.700" cy="11.500" r="6.600" fill="url(#gBallLt)" stroke="#3a4ad0" stroke-width="0.700"/><circle cx="12.900" cy="18.700" r="7.900" fill="url(#gBallBl)" stroke="#0a1560" stroke-width="0.800"/></svg>
<svg class="ic" style="left:689px;top:76px" width="32" height="32" viewBox="0 0 32 32"><ellipse cx="20" cy="25.200" rx="6" ry="1.500" fill="#8a8a8a"/>
<circle cx="12.500" cy="18.300" r="7.600" fill="url(#gBallGr)" stroke="#5a5a5a" stroke-width="0.800"/><circle cx="19.700" cy="11.500" r="6.800" fill="#fefefe" stroke="#4a4a4a" stroke-width="0.900"/></svg>
<svg class="ic" style="left:725px;top:76px" width="32" height="32" viewBox="0 0 32 32"><ellipse cx="22" cy="24.300" rx="5.500" ry="1.600" fill="#8a8a8a"/>
<path d="M4.800 18.300a7.800 7.800 0 0 0 15.500 1.300a6.800 6.800 0 1 0-7.300-9.100a7.800 7.800 0 0 0-8.200 7.800z" fill="url(#gBallGr)" stroke="#5a5a5a" stroke-width="0.800"/></svg>
<svg class="ic" style="left:761px;top:76px" width="32" height="32" viewBox="0 0 32 32"><path d="M14 23l8-0.500 1.500 1.800-7 0.200z" fill="#9a9a9a"/>
<circle cx="13.100" cy="18.300" r="8" fill="#fdfdfd" stroke="#5a5a5a" stroke-width="0.900"/><circle cx="19.700" cy="11.800" r="7.100" fill="#fdfdfd" stroke="#5a5a5a" stroke-width="0.900"/>
<path d="M12.650 10.900A8 8 0 0 1 21.050 17.600A7.100 7.100 0 0 1 12.650 10.900z" fill="url(#gBallGr)" stroke="#5a5a5a" stroke-width="0.800"/>
<circle cx="13.100" cy="18.300" r="8" fill="none" stroke="#5a5a5a" stroke-width="0.900"/></svg>
<svg class="ic" style="left:797px;top:76px" width="32" height="32" viewBox="0 0 32 32"><path d="M20.500 21.500l6.700 0.500 0 3.500-5.500 0.500z" fill="#8a8a8a"/>
<path d="M14.100 8l-8.500 16c0.500 2.600 16.500 2.600 17 0z" fill="url(#gG2)" stroke="#9a9a9a" stroke-width="0.600"/>
<circle cx="14.100" cy="10.500" r="4.600" fill="#ececec" stroke="#c4c4c4" stroke-width="1.600"/><circle cx="14.100" cy="10.500" r="5.400" fill="none" stroke="#9a9a9a" stroke-width="0.500"/>
<path d="M18 13.500l7.900 5" stroke="#6a6a6a" stroke-width="1.200"/></svg>
<svg class="ic" style="left:833px;top:76px" width="32" height="32" viewBox="0 0 32 32"><path d="M8 5.200l14 0.300 5.200 3.500v12.600l-6.900 2.400z" fill="#a9a9a9" stroke="#9a9a9a" stroke-width="0.500"/>
<path d="M4.900 5.200l15.400 3.800v17.200l-15.400-3.700z" fill="#dcdcdc" stroke="#8e8e8e" stroke-width="0.800"/>
<path d="M7 8.500l11 2.700v11.600l-11-3z" fill="url(#gG2)" stroke="#8a8a8a" stroke-width="0.600"/>
<path d="M8.500 10.500l8 2v8l-8-2.200z" fill="#8c8c8c"/><path d="M13.500 11.800v5l-5 1.500M13.500 16.800l3 2" fill="none" stroke="#6e6e6e" stroke-width="0.800"/></svg>
<svg class="ic" style="left:869px;top:76px" width="32" height="32" viewBox="0 0 32 32"><path d="M9.900 7l6-2.400 6.800 1.500v18.500l-5.500 2.300-7.300-2.400z" fill="url(#gG2)" stroke="#6e6e6e" stroke-width="0.600"/>
<path d="M9.900 7l6-2.400 6.800 1.500-5.500 2.400z" fill="#5e5e5e"/><path d="M17.200 8.500v18.400" stroke="#5e5e5e" stroke-width="0.700"/>
<path d="M4.300 13.100l11.200-5.100 12.400 1.200-10.900 5.800z" fill="#b4b4b4" fill-opacity="0.750" stroke="#8a8a8a" stroke-width="0.600"/>
<path d="M4.300 20.400l11.200-5.100 12.400 1.200-10.900 5.800z" fill="#b4b4b4" fill-opacity="0.750" stroke="#8a8a8a" stroke-width="0.600"/></svg>
<svg class="ic" style="left:918px;top:76px" width="32" height="32" viewBox="0 0 32 32"><path d="M21.300 8.500l6 5.500-6 6.500z" fill="url(#gShadow)"/>
<path d="M5 7.500l3.800-2.500 10.700 0.300c1.200 0 2 0.800 2 2v12.200l-3.800 3.800z" fill="#c9c9c9" stroke="#7a7a7a" stroke-width="0.700" stroke-linejoin="round"/>
<path d="M6.800 6.500l9.400-0.500c1 0 1.600 0.600 1.600 1.600v14.200c0 1-0.700 1.500-1.600 1.300l-9.200-2c-1-0.200-1.700-1-1.700-2l-0.300-10.900c0-1 0.800-1.700 1.800-1.700z" fill="url(#gGfront)" stroke="#7a7a7a" stroke-width="0.800"/>
<ellipse cx="19.800" cy="15.900" rx="1.200" ry="2.400" fill="#e4e01c"/>
<ellipse cx="11.200" cy="14.500" rx="4.700" ry="5.600" fill="#0a0606"/><path d="M6.650 13.100A4.700 5.600 0 0 1 15.850 14.200z" fill="#f0ee22"/>
<ellipse cx="11.200" cy="14.500" rx="5.100" ry="6" fill="none" stroke="#9a9a9a" stroke-width="0.600"/>
<path d="M18.300 20.300l8.300 2.300" stroke="#e6e07c" stroke-width="2.300"/><path d="M19 20.500l7.500 2.100" stroke="#7a7430" stroke-width="0.800" stroke-dasharray="0.700 1"/><path d="M26.300 22.500v2.300" stroke="#b0b0a0" stroke-width="0.900"/></svg>
<svg class="ic" style="left:954px;top:76px" width="32" height="32" viewBox="0 0 32 32"><path d="M21.300 8.500l6 5.500-6 6.500z" fill="url(#gShadow)"/>
<path d="M5 7.500l3.800-2.500 10.700 0.300c1.200 0 2 0.800 2 2v12.200l-3.800 3.800z" fill="#c9c9c9" stroke="#7a7a7a" stroke-width="0.700" stroke-linejoin="round"/>
<path d="M6.800 6.500l9.400-0.500c1 0 1.600 0.600 1.600 1.600v14.200c0 1-0.700 1.500-1.600 1.300l-9.200-2c-1-0.200-1.700-1-1.700-2l-0.300-10.900c0-1 0.800-1.700 1.800-1.700z" fill="url(#gGfront)" stroke="#7a7a7a" stroke-width="0.800"/>
<ellipse cx="19.800" cy="15.900" rx="1.200" ry="2.400" fill="#e4e01c"/>
<ellipse cx="11.200" cy="14.500" rx="4.700" ry="5.600" fill="#0a0606"/><path d="M6.650 13.100A4.700 5.600 0 0 1 15.850 14.200z" fill="#f0ee22"/>
<ellipse cx="11.200" cy="14.500" rx="5.100" ry="6" fill="none" stroke="#9a9a9a" stroke-width="0.600"/>
<path d="M18.300 20.300l8.300 2.300" stroke="#e6e07c" stroke-width="2.300"/><path d="M19 20.500l7.500 2.100" stroke="#7a7430" stroke-width="0.800" stroke-dasharray="0.700 1"/><path d="M26.300 22.500v2.300" stroke="#b0b0a0" stroke-width="0.900"/><path d="M12.400 25.500l14.100-17" stroke="#2a0a0a" stroke-width="3.200"/><path d="M12.400 25.500l14.100-17" stroke="#b04030" stroke-width="2"/>
<path d="M5.500 5.900l6.900 19.600" stroke="#2a0a0a" stroke-width="3.400"/><path d="M5.500 5.900l6.900 19.600" stroke="#f03424" stroke-width="2.200"/>
<path d="M9.500 8.200c3-4 9.500-4 12.500 0" fill="none" stroke="#1a5ad0" stroke-width="1.800"/><path d="M23.800 10.200l-4-0.600 3-3.200z" fill="#1a5ad0"/></svg>
<svg class="ic" style="left:1000px;top:76px" width="32" height="32" viewBox="0 0 32 32"><path d="M21.300 8.500l6 5.500-6 6.500z" fill="url(#gShadow)"/>
<path d="M5 7.500l3.800-2.500 10.700 0.300c1.200 0 2 0.800 2 2v12.200l-3.800 3.800z" fill="#c9c9c9" stroke="#7a7a7a" stroke-width="0.700" stroke-linejoin="round"/>
<path d="M6.800 6.500l9.400-0.500c1 0 1.600 0.600 1.600 1.600v14.200c0 1-0.700 1.500-1.600 1.300l-9.200-2c-1-0.200-1.700-1-1.700-2l-0.300-10.900c0-1 0.800-1.700 1.800-1.700z" fill="url(#gGfront)" stroke="#7a7a7a" stroke-width="0.800"/>
<ellipse cx="19.800" cy="15.900" rx="1.200" ry="2.400" fill="#e4e01c"/>
<ellipse cx="11.200" cy="14.500" rx="4.700" ry="5.600" fill="#0a0606"/><path d="M6.650 13.100A4.700 5.600 0 0 1 15.850 14.200z" fill="#f0ee22"/>
<ellipse cx="11.200" cy="14.500" rx="5.100" ry="6" fill="none" stroke="#9a9a9a" stroke-width="0.600"/>
<path d="M18.300 20.300l8.300 2.300" stroke="#e6e07c" stroke-width="2.300"/><path d="M19 20.500l7.500 2.100" stroke="#7a7430" stroke-width="0.800" stroke-dasharray="0.700 1"/><path d="M26.300 22.500v2.300" stroke="#b0b0a0" stroke-width="0.900"/><path d="M9.500 20.500l13.500-13 3 3-13.500 13z" fill="#f0e488" stroke="#6a5a20" stroke-width="0.800"/>
<path d="M23 7.500l4.400-2.500-1.400 5.500z" fill="#e4c098" stroke="#6a5a20" stroke-width="0.600"/><path d="M27.400 5l-2.200 1.200 1.400 1.500z" fill="#111"/>
<path d="M9.500 20.500l3 3-2.500 2.200c-1.200 1-4-1.800-3-3z" fill="#c87878" stroke="#4a2a2a" stroke-width="0.900"/></svg>
<svg class="ic" style="left:1036px;top:76px" width="32" height="32" viewBox="0 0 32 32"><g transform="translate(2.5 0)"><path d="M21.300 8.500l6 5.500-6 6.500z" fill="url(#gShadow)"/>
<path d="M5 7.500l3.800-2.500 10.700 0.300c1.200 0 2 0.800 2 2v12.200l-3.800 3.800z" fill="#c9c9c9" stroke="#7a7a7a" stroke-width="0.700" stroke-linejoin="round"/>
<path d="M6.800 6.500l9.400-0.500c1 0 1.600 0.600 1.600 1.600v14.200c0 1-0.700 1.500-1.600 1.300l-9.200-2c-1-0.200-1.700-1-1.700-2l-0.300-10.900c0-1 0.800-1.700 1.800-1.700z" fill="url(#gGfront)" stroke="#7a7a7a" stroke-width="0.800"/>
<ellipse cx="19.800" cy="15.900" rx="1.200" ry="2.400" fill="#e4e01c"/>
<ellipse cx="11.200" cy="14.500" rx="4.700" ry="5.600" fill="#0a0606"/><path d="M6.650 13.100A4.700 5.600 0 0 1 15.850 14.200z" fill="#f0ee22"/>
<ellipse cx="11.200" cy="14.500" rx="5.100" ry="6" fill="none" stroke="#9a9a9a" stroke-width="0.600"/>
<path d="M18.300 20.300l8.300 2.300" stroke="#e6e07c" stroke-width="2.300"/><path d="M19 20.500l7.500 2.100" stroke="#7a7430" stroke-width="0.800" stroke-dasharray="0.700 1"/><path d="M26.300 22.500v2.300" stroke="#b0b0a0" stroke-width="0.900"/></g><path d="M6.100 24.200v-17h21.700v17h-3.400v-14.700h-14.900v14.700z" fill="#2a8c2a"/><path d="M6.700 17l7.200-11.500 13.700 7.600-9.100 12.400" fill="none" stroke="#c83232" stroke-width="2.600"/></svg>
<svg class="ic" style="left:1072px;top:76px" width="32" height="32" viewBox="0 0 32 32"><path d="M21.300 8.500l6 5.500-6 6.500z" fill="url(#gShadow)"/>
<path d="M5 7.500l3.800-2.500 10.700 0.300c1.200 0 2 0.800 2 2v12.200l-3.800 3.800z" fill="#c9c9c9" stroke="#7a7a7a" stroke-width="0.700" stroke-linejoin="round"/>
<path d="M6.800 6.500l9.400-0.500c1 0 1.600 0.600 1.600 1.600v14.200c0 1-0.700 1.500-1.600 1.300l-9.200-2c-1-0.200-1.700-1-1.700-2l-0.300-10.900c0-1 0.800-1.700 1.800-1.700z" fill="url(#gGfront)" stroke="#7a7a7a" stroke-width="0.800"/>
<ellipse cx="19.800" cy="15.900" rx="1.200" ry="2.400" fill="#e4e01c"/>
<ellipse cx="11.200" cy="14.500" rx="4.700" ry="5.600" fill="#0a0606"/><path d="M6.650 13.100A4.700 5.600 0 0 1 15.850 14.200z" fill="#f0ee22"/>
<ellipse cx="11.200" cy="14.500" rx="5.100" ry="6" fill="none" stroke="#9a9a9a" stroke-width="0.600"/>
<path d="M18.300 20.300l8.300 2.300" stroke="#e6e07c" stroke-width="2.300"/><path d="M19 20.500l7.500 2.100" stroke="#7a7430" stroke-width="0.800" stroke-dasharray="0.700 1"/><path d="M26.300 22.500v2.300" stroke="#b0b0a0" stroke-width="0.900"/><path d="M6.700 17l7.200-11.500 13.700 7.600-9.100 12.400" fill="none" stroke="#c83232" stroke-width="2.600"/></svg>
<svg class="ic" style="left:1108px;top:76px" width="32" height="32" viewBox="0 0 32 32"><g transform="translate(2.5 0)"><path d="M21.300 8.500l6 5.500-6 6.500z" fill="url(#gShadow)"/>
<path d="M5 7.500l3.800-2.500 10.700 0.300c1.200 0 2 0.800 2 2v12.200l-3.800 3.800z" fill="#c9c9c9" stroke="#7a7a7a" stroke-width="0.700" stroke-linejoin="round"/>
<path d="M6.800 6.500l9.400-0.500c1 0 1.600 0.600 1.600 1.600v14.200c0 1-0.700 1.500-1.600 1.300l-9.200-2c-1-0.200-1.700-1-1.700-2l-0.300-10.900c0-1 0.800-1.700 1.800-1.700z" fill="url(#gGfront)" stroke="#7a7a7a" stroke-width="0.800"/>
<ellipse cx="19.800" cy="15.900" rx="1.200" ry="2.400" fill="#e4e01c"/>
<ellipse cx="11.200" cy="14.500" rx="4.700" ry="5.600" fill="#0a0606"/><path d="M6.650 13.100A4.700 5.600 0 0 1 15.850 14.200z" fill="#f0ee22"/>
<ellipse cx="11.200" cy="14.500" rx="5.100" ry="6" fill="none" stroke="#9a9a9a" stroke-width="0.600"/>
<path d="M18.300 20.300l8.300 2.300" stroke="#e6e07c" stroke-width="2.300"/><path d="M19 20.500l7.500 2.100" stroke="#7a7430" stroke-width="0.800" stroke-dasharray="0.700 1"/><path d="M26.300 22.500v2.300" stroke="#b0b0a0" stroke-width="0.900"/></g><path d="M6.100 24.200v-17h21.700v17h-3.400v-14.700h-14.900v14.700z" fill="#2a8c2a"/></svg>
<!-- text labels -->
<span class="t" id="t0" style="left:75px;top:10.31px;font-size:15px;font-weight:bold;color:#dfdbd2;letter-spacing:-0.315px;">FreeCAD</span>
<span class="t" id="t1" style="left:4.5px;top:116.11px;font-size:15px;font-weight:normal;color:#3c3c3c;letter-spacing:-0.163px;">Combo View</span>
<span class="t" id="t2" style="left:11px;top:143.11px;font-size:15px;font-weight:normal;color:#3c3c3c;letter-spacing:0.110px;">Model</span>
<span class="t" id="t3" style="left:69px;top:144.11px;font-size:15px;font-weight:normal;color:#3c3c3c;letter-spacing:-0.761px;">Tasks</span>
<span class="t" id="t4" style="left:9px;top:173.11px;font-size:15px;font-weight:normal;color:#3c3c3c;letter-spacing:0.123px;">Labels &amp; Attributes</span>
<span class="t" id="t5" style="left:8px;top:194.61px;font-size:15px;font-weight:normal;color:#3c3c3c;letter-spacing:0.291px;">Application</span>
<span class="t" id="t6" style="left:50px;top:213.61px;font-size:15px;font-weight:bold;color:#2a2a2a;letter-spacing:-0.507px;">Unnamed</span>
<span class="t" id="t7" style="left:70px;top:232.61px;font-size:15px;font-weight:bold;color:#2a2a2a;letter-spacing:-0.574px;">Fusion</span>
<span class="t" id="t8" style="left:11px;top:628.11px;font-size:15px;font-weight:normal;color:#3c3c3c;letter-spacing:0.371px;">Property</span>
<span class="t" id="t9" style="left:111px;top:628.11px;font-size:15px;font-weight:normal;color:#3c3c3c;letter-spacing:0.009px;">Value</span>
<span class="t" id="t10" style="left:13px;top:1123.11px;font-size:15px;font-weight:normal;color:#3c3c3c;letter-spacing:0.017px;">View</span>
<span class="t" id="t11" style="left:62px;top:1123.81px;font-size:15px;font-weight:normal;color:#3c3c3c;letter-spacing:-0.129px;">Data</span>
<span class="t" id="t12" style="left:8px;top:1156.11px;font-size:15px;font-weight:normal;color:#3c3c3c;letter-spacing:-0.232px;">Preselected: Unnamed.Fusion.Face6 (0.411266,-0.000000,2.592058)</span>
<span class="t" id="t13" style="left:295px;top:1123.71px;font-size:15px;font-weight:normal;color:#3c3c3c;letter-spacing:0.009px;">Start page</span>
<span class="t" id="t14" style="left:428px;top:1124.51px;font-size:15px;font-weight:normal;color:#3c3c3c;letter-spacing:-0.130px;">Unnamed : 1*</span>
<span class="t" id="t15" style="left:1075px;top:1157.11px;font-size:15px;font-weight:normal;color:#3c3c3c;letter-spacing:-0.252px;">39.40 x 42.49 mm</span>
<span class="t" id="t16" style="left:483px;top:43.11px;font-size:15px;font-weight:normal;color:#3c3c3c;letter-spacing:0.261px;">Part</span>
</body></html>
